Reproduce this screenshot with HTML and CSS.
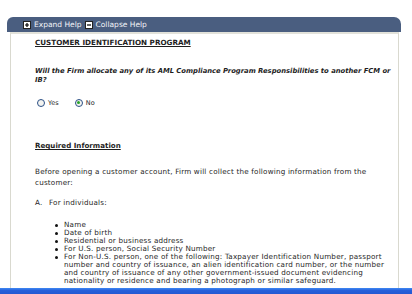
FILE: index.html
```html
<!DOCTYPE html>
<html>
<head>
<meta charset="utf-8">
<link rel="stylesheet" href="styles.css">
</head>
<body>
<div class="screen">
  <div class="window">
    <div class="helpbar">
      <span class="hicon"><svg width="8" height="8" viewBox="0 0 8 8"><rect x="0.5" y="0.5" width="7" height="7" fill="#fff" stroke="#222"/><path d="M2 4H6M4 2V6" stroke="#000" stroke-width="1.2"/></svg></span>
      <span class="hlabel">Expand Help</span>
      <span class="hicon"><svg width="8" height="8" viewBox="0 0 8 8"><rect x="0.5" y="0.5" width="7" height="7" fill="#fff" stroke="#222"/><path d="M2 4H6" stroke="#000" stroke-width="1.2"/></svg></span>
      <span class="hlabel">Collapse Help</span>
    </div>
    <div class="panel">
      <div class="title">CUSTOMER IDENTIFICATION PROGRAM</div>
      <div class="question">Will the Firm allocate any of its AML Compliance Program Responsibilities to another FCM or IB?</div>
      <div class="radios">
        <span class="radio"></span><span class="rlabel">Yes</span>
        <span class="radio checked"></span><span class="rlabel">No</span>
      </div>
      <div class="subhead">Required Information</div>
      <div class="para">Before opening a customer account, Firm will collect the following information from the customer:</div>
      <div class="alpha"><span class="letter">A.</span><span>For individuals:</span></div>
      <ul class="bullets">
        <li>Name</li>
        <li>Date of birth</li>
        <li>Residential or business address</li>
        <li>For U.S. person, Social Security Number</li>
        <li>For Non-U.S. person, one of the following: Taxpayer Identification Number, passport number and country of issuance, an alien identification card number, or the number and country of issuance of any other government-issued document evidencing nationality or residence and bearing a photograph or similar safeguard.</li>
      </ul>
    </div>
  </div>
</div>
<div class="taskbar"></div>
</body>
</html>
```
FILE: styles.css
```css
html, body {
  margin: 0;
  padding: 0;
  background: #fff;
}
body {
  width: 412px;
  height: 294px;
  overflow: hidden;
  font-family: "DejaVu Sans", Verdana, sans-serif;
  color: #1e1e1e;
}
.screen {
  height: 288px;
  overflow: hidden;
  padding: 17px 11px 0 7px;
  box-sizing: border-box;
}
.window {
  display: flex;
  flex-direction: column;
  height: 100%;
}
.helpbar {
  height: 15px;
  background: #4a5e80;
  border-radius: 6px 7px 0 0;
  display: flex;
  align-items: center;
  padding-left: 16px;
  color: #f2f4f8;
  font-size: 7.5px;
  flex: none;
}
.hicon {
  display: flex;
  width: 8px;
  height: 8px;
  margin-right: 3px;
}
.hlabel {
  margin-right: 3px;
}
.panel {
  flex: 1;
  margin: 0 2px 0 3px;
  border-left: 1px solid #d9d9cf;
  border-right: 1px solid #d9d9cf;
  border-top: 2px solid #e2e2da;
  padding: 4px 0 0 24px;
  font-size: 7.2px;
  letter-spacing: 0.2px;
  line-height: 8px;
}
.title {
  font-weight: bold;
  font-size: 7.2px;
  letter-spacing: 0;
  text-decoration: underline;
  margin-top: 1px;
}
.question {
  margin-top: 20px;
  font-weight: bold;
  font-style: italic;
  font-size: 6.8px;
  letter-spacing: 0;
  line-height: 9px;
  width: 360px;
}
.radios {
  margin-top: 13px;
  display: flex;
  align-items: center;
  height: 9px;
  padding-left: 2px;
}
.radio {
  width: 6px;
  height: 6px;
  border: 1px solid #2b4f86;
  border-radius: 50%;
  background: #f4f4f0;
  margin-right: 3px;
  position: relative;
}
.radio.checked::after {
  content: "";
  position: absolute;
  left: 1.5px;
  top: 1.5px;
  width: 3px;
  height: 3px;
  border-radius: 50%;
  background: #27a327;
}
.rlabel {
  font-size: 6.5px;
  letter-spacing: 0.1px;
  margin-right: 16px;
}
.subhead {
  margin-top: 35px;
  font-weight: bold;
  font-size: 7.1px;
  letter-spacing: 0;
  text-decoration: underline;
}
.para {
  margin-top: 16px;
  line-height: 11px;
  width: 350px;
}
.alpha {
  margin-top: 11px;
  display: flex;
}
.letter {
  width: 14px;
}
.bullets {
  margin: 14px 0 0 0;
  padding-left: 29px;
  width: 330px;
  list-style: none;
}
.bullets li {
  position: relative;
}
.bullets li::before {
  content: "";
  position: absolute;
  left: -9px;
  top: 2.5px;
  width: 3px;
  height: 3px;
  border-radius: 50%;
  background: #111;
}
.taskbar {
  height: 6px;
  background: linear-gradient(#3a80ee 0, #3a80ee 1px, #2660dc 2px, #2458d2 6px);
}
```
